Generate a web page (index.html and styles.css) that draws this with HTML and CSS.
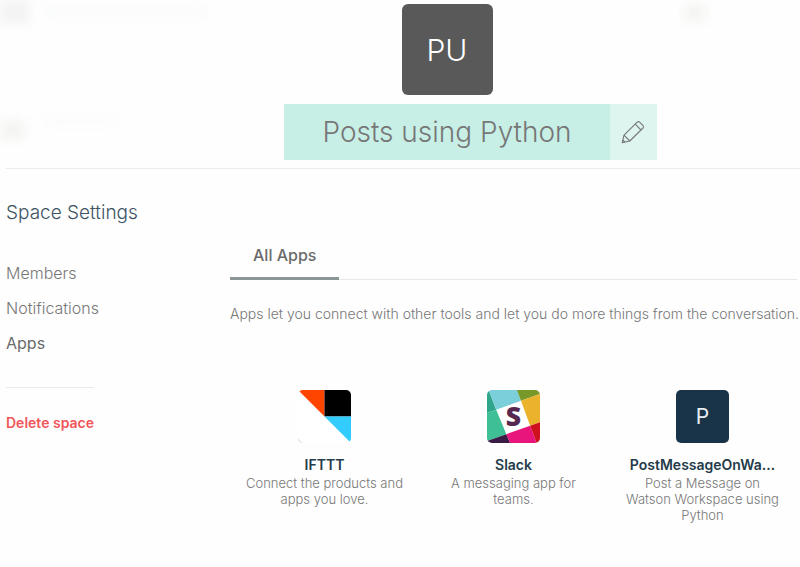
FILE: index.html
```html
<!DOCTYPE html>
<html lang="en">
<head>
<meta charset="utf-8">
<meta name="viewport" content="width=device-width, initial-scale=1">
<title>Space Settings</title>
<link rel="stylesheet" href="styles.css">
</head>
<body>
<div class="haze" aria-hidden="true">
  <span class="smudge smudge-logo"></span>
  <span class="smudge smudge-heading"></span>
  <span class="smudge smudge-person"></span>
  <span class="smudge smudge-name"></span>
  <span class="smudge smudge-user"></span>
</div>
<header class="space-header">
  <div class="space-avatar">PU</div>
  <div class="title-row">
    <h1 class="space-title">Posts using Python</h1>
    <button class="edit-button" type="button" aria-label="Edit name">
      <svg class="pencil" viewBox="0 0 24 24" fill="none" stroke="currentColor" stroke-width="1.1" stroke-linejoin="round">
        <path d="M1.200 22.800L3 15.200L16.200 2.200Q17.400 1 18.600 2.200L22 5.600Q23.200 6.800 22 8L8.800 21Z"/>
        <path d="M3 15.200L8.800 21M14.200 4.200L20 10M1.800 20L4 22.200"/>
      </svg>
    </button>
  </div>
</header>
<div class="layout">
  <aside class="sidebar">
    <h2 class="sidebar-title">Space Settings</h2>
    <nav class="sidebar-nav">
      <a class="nav-link" href="#members">Members</a>
      <a class="nav-link" href="#notifications">Notifications</a>
      <a class="nav-link nav-link-active" href="#apps">Apps</a>
    </nav>
    <div class="danger">
      <button class="delete-button" type="button">Delete space</button>
    </div>
  </aside>
  <main class="content">
    <div class="tabs">
      <button class="tab" type="button">All Apps</button>
    </div>
    <p class="intro">Apps let you connect with other tools and let you do more things from the conversation.</p>
    <div class="apps">
      <article class="app">
        <svg class="app-icon" viewBox="0 0 52 52">
          <path fill="#fff" d="M0 0H52V52H0z"/>
          <path fill="#ff4500" d="M0 0H26V26z"/>
          <path fill="#000" d="M26 0H52V26H26z"/>
          <path fill="#33ccff" d="M26 26H52V52z"/>
          <path d="M0 48Q1 51 4 52" fill="none" stroke="#ccc" stroke-width="1"/>
        </svg>
        <h3 class="app-name">IFTTT</h3>
        <p class="app-text">Connect the products and apps you love.</p>
      </article>
      <article class="app">
        <svg class="app-icon" viewBox="0 0 156 156">
          <path fill="#fff" d="M0 0H156V156H0z"/>
          <path fill="#2fa58b" d="M0 0H5L27 58L0 68z"/>
          <path fill="#7bcfda" d="M5 0H88L100 32L27 58z"/>
          <path fill="#78992a" d="M88 0H156V12L100 32z"/>
          <path fill="#3ebf96" d="M0 68L27 58L57 130L0 150z"/>
          <path fill="#ebb32c" d="M100 32L156 12V95L127 105z"/>
          <path fill="#391b46" d="M0 150L57 130L68 156H0z"/>
          <path fill="#e7157c" d="M57 130L127 105L146 156H68z"/>
          <path fill="#cf101d" d="M127 105L156 95V156H146z"/>
          <text class="slack-letter" x="78" y="107" text-anchor="middle">S</text>
        </svg>
        <h3 class="app-name">Slack</h3>
        <p class="app-text">A messaging app for teams.</p>
      </article>
      <article class="app">
        <div class="app-icon app-icon-letter">P</div>
        <h3 class="app-name">PostMessageOnWa…</h3>
        <p class="app-text">Post a Message on Watson Workspace using Python</p>
      </article>
    </div>
  </main>
</div>
</body>
</html>
```
FILE: styles.css
```css
* {
  box-sizing: border-box;
}

body {
  margin: 0;
  background: #fefefe;
  color: #777;
  font-family: Inter, "Liberation Sans", sans-serif;
  font-weight: 300;
}

h1, h2, h3, p {
  margin: 0;
}

button {
  border: 0;
  padding: 0;
  background: none;
  color: inherit;
  font: inherit;
  cursor: pointer;
}

.haze {
  position: absolute;
  inset: 0 0 auto;
  height: 160px;
  overflow: hidden;
  z-index: -1;
}

.smudge {
  position: absolute;
  filter: blur(5px);
}

.smudge-logo { left: 0; top: 0; width: 30px; height: 24px; background: #f4f4f4; }
.smudge-heading { left: 46px; top: 6px; width: 160px; height: 11px; background: #fafbfb; }
.smudge-person { left: 0; top: 120px; width: 25px; height: 20px; background: #f5f5f3; }
.smudge-name { left: 46px; top: 116px; width: 72px; height: 10px; background: #fbfbfb; }
.smudge-user { left: 684px; top: 4px; width: 22px; height: 18px; background: #f5f5f3; }

.space-header {
  display: flex;
  flex-direction: column;
  align-items: center;
  gap: 9px;
  margin-left: 6px;
  padding: 4px 0 8px 88px;
  border-bottom: 1px solid #ebebeb;
}

.space-avatar {
  display: grid;
  place-items: center;
  width: 91px;
  height: 91px;
  border-radius: 6px;
  background: #595959;
  color: #fff;
  font-size: 30px;
}

.title-row {
  display: grid;
  grid-template-columns: 1fr auto 1fr;
  width: 100%;
}

.space-title {
  grid-column: 2;
  padding: 0 38px;
  background: #c8efe6;
  font-size: 28px;
  font-weight: 300;
  line-height: 56px;
  white-space: nowrap;
}

.edit-button {
  display: grid;
  place-items: center;
  width: 47px;
  background: #def4ee;
}

.pencil {
  width: 24px;
  height: 24px;
}

.layout {
  display: grid;
  grid-template-columns: 224px 1fr;
  padding: 32px 3px 40px 6px;
}

.sidebar {
  display: flex;
  flex-direction: column;
  align-items: flex-start;
}

.sidebar-title {
  color: #3d5363;
  font-size: 19px;
  font-weight: 300;
  line-height: 24px;
}

.sidebar-nav {
  display: flex;
  flex-direction: column;
  gap: 11px;
  margin-top: 36px;
}

.nav-link {
  color: #777;
  font-size: 16px;
  line-height: 24px;
  text-decoration: none;
}

.nav-link-active {
  color: #6b6b6b;
  font-weight: 400;
}

.danger {
  margin-top: 32px;
  padding-top: 24px;
  border-top: 1px solid #ebebeb;
}

.delete-button {
  color: #f0565a;
  font-size: 14px;
  font-weight: 600;
  line-height: 20px;
}

.content {
  min-width: 0;
  padding-top: 42px;
}

.tabs {
  display: flex;
  border-bottom: 1px solid #e8e8e8;
}

.tab {
  margin-bottom: -1px;
  padding: 0 23px 10px;
  border-bottom: 3px solid #8c9696;
  color: #6b6b6b;
  font-size: 16px;
  font-weight: 500;
  line-height: 24px;
}

.intro {
  margin-top: 24px;
  font-size: 14px;
  line-height: 20px;
  white-space: nowrap;
}

.apps {
  display: grid;
  grid-template-columns: repeat(3, 1fr);
  margin-top: 66px;
}

.app {
  display: flex;
  flex-direction: column;
  align-items: center;
  text-align: center;
}

.app-icon {
  width: 53px;
  height: 53px;
  border-radius: 5px;
}

.app-icon-letter {
  display: grid;
  place-items: center;
  background: #193448;
  color: #e8edf0;
  font-size: 21px;
  font-weight: 400;
}

.slack-letter {
  fill: #56284f;
  font-family: "Open Sans", sans-serif;
  font-size: 78px;
  font-weight: 800;
}

.app-name {
  margin-top: 12px;
  color: #243b4a;
  font-size: 14px;
  font-weight: 600;
  line-height: 20px;
  white-space: nowrap;
}

.app-text {
  max-width: 162px;
  font-size: 13px;
  line-height: 16px;
}
```
